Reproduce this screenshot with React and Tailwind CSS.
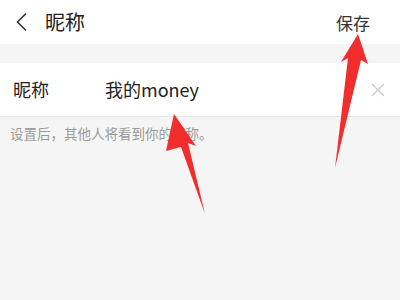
export default function App() {
  return (
    <div
      className="relative w-[400px] h-[300px] overflow-hidden bg-[#f5f5f5]"
      style={{ fontFamily: '"Noto Sans CJK SC", "Noto Sans", sans-serif' }}
    >
      {/* header */}
      <div className="flex h-[44px] items-center bg-white pl-[15px] pr-[30px]">
        <svg width="13" height="20" viewBox="0 0 13 20" className="mr-[17px]">
          <path d="M11 1.5 L2.5 10 L11 18.5" fill="none" stroke="#333" strokeWidth="1.6" />
        </svg>
        <span className="text-[20px] leading-none text-[#222]">昵称</span>
        <span className="ml-auto text-[17px] leading-none text-[#333]">保存</span>
      </div>

      <div className="h-[19px] bg-[#f5f5f5]" />

      {/* nickname row */}
      <div className="flex h-[54px] items-center border-b border-[#e6e6e6] bg-white pl-[13px] pr-[15px]">
        <span className="w-[92px] text-[18px] text-[#222]">昵称</span>
        <span className="flex-1 text-[18px] text-[#222]">我的money</span>
        <svg width="14" height="14" viewBox="0 0 14 14">
          <path d="M1 1 L13 13 M13 1 L1 13" stroke="#c8c8c8" strokeWidth="1.3" />
        </svg>
      </div>

      <div className="pl-[10px] pt-[6px] text-[13.5px] leading-[20px] text-[#9a9a9a]">
        设置后，其他人将看到你的昵称。
      </div>

      {/* red arrows */}
      <svg className="absolute left-0 top-0" width="400" height="300" viewBox="0 0 400 300">
        <polygon
          points="174,114 196,146 188,143 205,214 181,147 166,151"
          fill="#f22d2d"
        />
        <polygon
          points="358,34 368,64 361,60 335,168 348,58 341,62"
          fill="#f22d2d"
        />
      </svg>
    </div>
  );
}
